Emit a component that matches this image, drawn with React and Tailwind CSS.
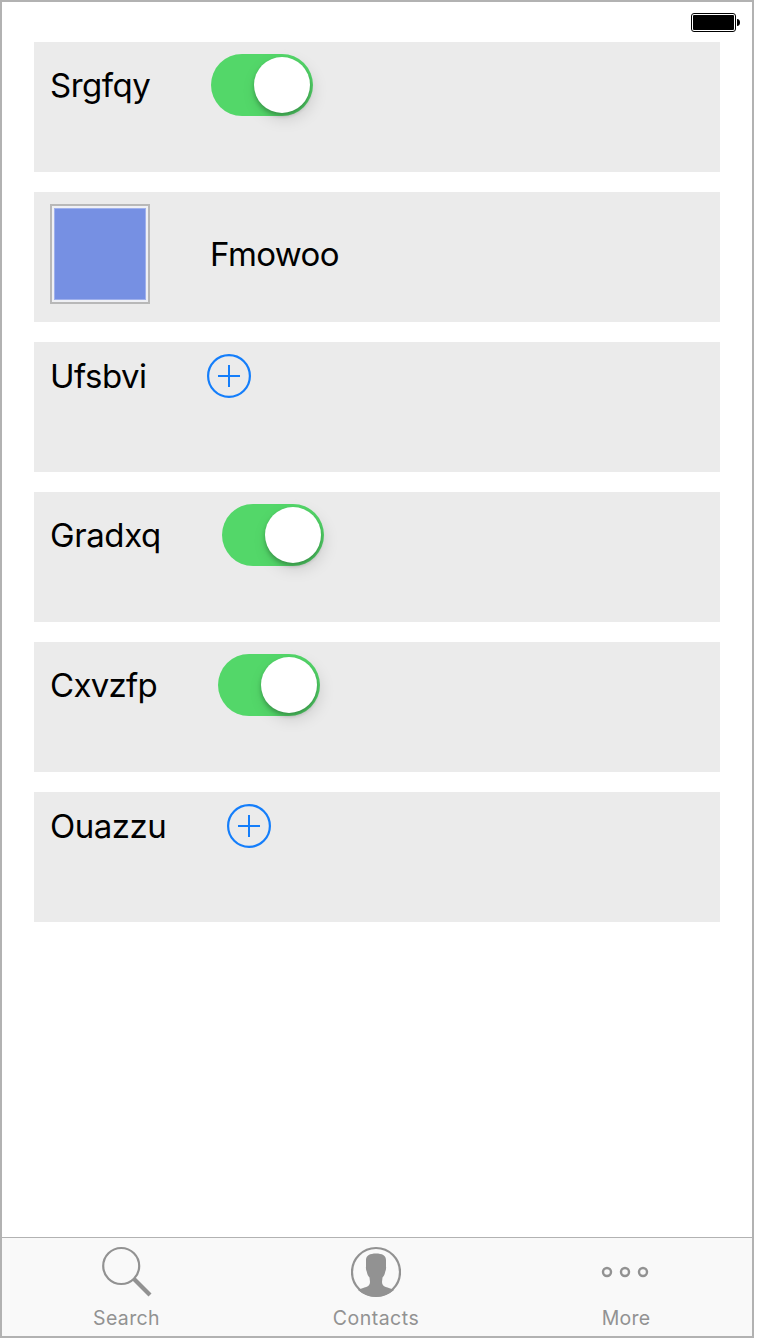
import React from "react";

function Toggle() {
  return (
    <div className="flex h-[62px] w-[102px] items-center justify-end rounded-full bg-[#53d769] pr-[3px]">
      <div className="size-14 rounded-full bg-white shadow-[3px_6px_16px_rgba(0,0,0,0.13),0_3px_4px_rgba(0,0,0,0.24)]" />
    </div>
  );
}

function AddButton() {
  return (
    <svg className="size-11" viewBox="0 0 44 44" fill="none" stroke="#147efb" strokeWidth="2">
      <circle cx="22" cy="22" r="20.900" strokeWidth="2.200" />
      <path d="M11 22H33M22 11V33" />
    </svg>
  );
}

function Swatch() {
  return (
    <div className="size-[100px] border-2 border-[#b8b8b8] bg-[#eff0f4] p-[2px]">
      <div className="size-full border border-[#9fb0ec] bg-[#7690e3]" />
    </div>
  );
}

function Label({ children, className }) {
  return (
    <span className={`block shrink-0 whitespace-nowrap text-[33px] leading-10 text-black ${className}`}>
      {children}
    </span>
  );
}

function Row({ children }) {
  return (
    <div className="h-[130px] bg-[#ebebeb] pt-3 pl-4">
      <div className="flex items-center">{children}</div>
    </div>
  );
}

function Tab({ icon, label, className }) {
  return (
    <div className="flex flex-1 flex-col items-center pt-2">
      <div className="flex h-[52px] items-center">{icon}</div>
      <span className={`mt-2 text-[19.5px] leading-6 ${className}`}>{label}</span>
    </div>
  );
}

const searchIcon = (
  <svg className="h-[52px] w-[50px]" viewBox="0 0 50 52" fill="none" stroke="#929292">
    <circle cx="19.200" cy="20" r="18" strokeWidth="2.200" />
    <path d="M32 33L48 49" strokeWidth="4.200" />
  </svg>
);

const contactsIcon = (
  <svg className="h-[52px] w-[50px]" viewBox="0 0 50 52">
    <circle cx="25" cy="26" r="24" fill="none" stroke="#929292" strokeWidth="2.200" />
    <path
      fill="#929292"
      d="M15 14C15 9.500 19 7.500 25 7.500C31 7.500 35 9.500 35 14V20.500C35.300 22 35 24 34.300 25.500C33.800 28 33 30 31.500 31.500L31 36C31 41.500 37 41 43 44C38 48.500 31.500 50.500 25 50.500C18.500 50.500 12 48.500 7 44C13 41 19 41.500 19 36L18.500 31.500C17 30 16.200 28 15.700 25.500C15 24 14.700 22 15 20.500Z"
    />
  </svg>
);

const moreIcon = (
  <svg className="h-[52px] w-[50px]" viewBox="0 0 50 52" fill="none" stroke="#929292" strokeWidth="2.400">
    <circle cx="6" cy="26" r="4" />
    <circle cx="24" cy="26" r="4" />
    <circle cx="42" cy="26" r="4" />
  </svg>
);

export default function App() {
  return (
    <div className="h-[1340px] w-[760px] bg-white font-['Inter',sans-serif]">
      <div className="flex h-[1338px] w-[754px] flex-col border-2 border-[#b2b2b2] bg-white">
        <div className="flex h-10 shrink-0 justify-end pt-[11px] pr-3">
          <svg className="h-[19px] w-[49px]" viewBox="0 0 49 19">
            <rect x="0.500" y="0.500" width="44" height="18" rx="2.500" fill="none" stroke="#000" />
            <rect x="2" y="2" width="41" height="15" rx="1" fill="#000" />
            <path d="M46 6C48 6 49 7.500 49 9.500S48 13 46 13Z" fill="#000" />
          </svg>
        </div>
        <div className="flex flex-1 flex-col gap-5 pr-8 pl-8">
          <Row>
            <Label className="w-[161px] tracking-[-0.5px]">Srgfqy</Label>
            <Toggle />
          </Row>
          <Row>
            <Swatch />
            <Label className="ml-[60px] tracking-[-0.6px]">Fmowoo</Label>
          </Row>
          <Row>
            <Label className="w-[157px] tracking-[-0.5px]">Ufsbvi</Label>
            <AddButton />
          </Row>
          <Row>
            <Label className="w-[172px] tracking-[-0.4px]">Gradxq</Label>
            <Toggle />
          </Row>
          <Row>
            <Label className="w-[168px] tracking-[-0.7px]">Cxvzfp</Label>
            <Toggle />
          </Row>
          <Row>
            <Label className="w-[177px] tracking-[-0.5px]">Ouazzu</Label>
            <AddButton />
          </Row>
        </div>
        <div className="grid h-[99px] shrink-0 grid-cols-[249px_250px_250px] border-t border-[#b2b2b2] bg-[#f9f9f9] text-[#929292]">
          <Tab icon={searchIcon} label="Search" className="tracking-[0.35px]" />
          <Tab icon={contactsIcon} label="Contacts" className="tracking-[0.5px]" />
          <Tab icon={moreIcon} label="More" className="tracking-[0.2px]" />
        </div>
      </div>
    </div>
  );
}
